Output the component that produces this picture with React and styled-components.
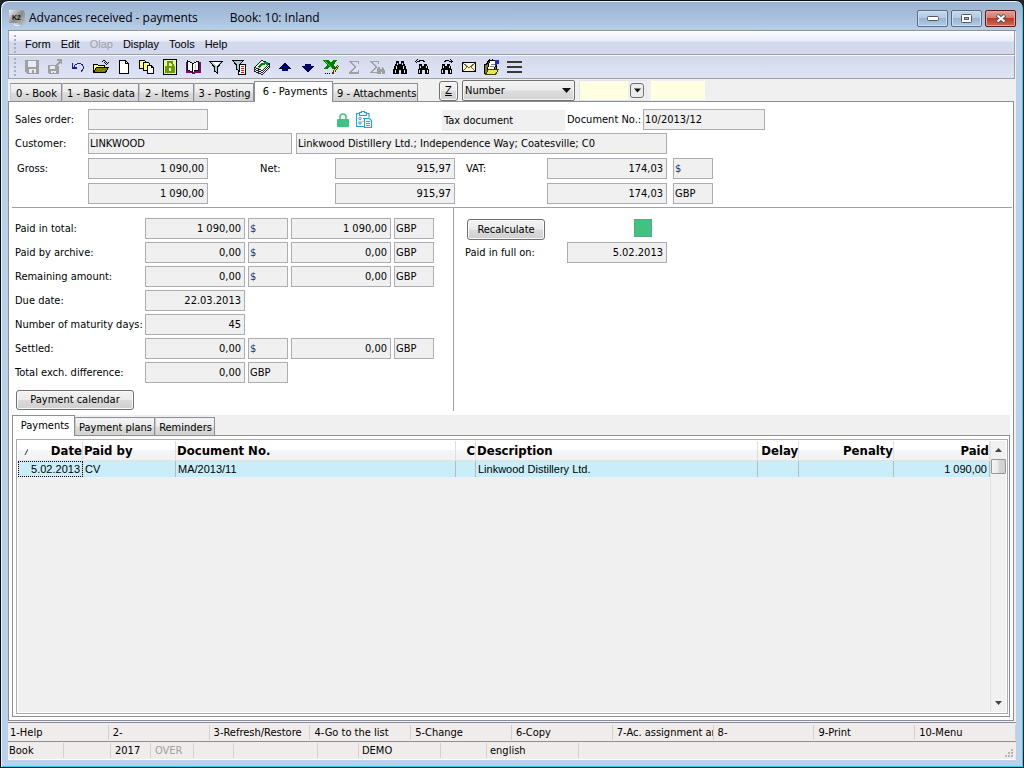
import React from "react";
import styled, { createGlobalStyle } from "styled-components";

const Global = createGlobalStyle`
  *, *::before, *::after { box-sizing: border-box; }
  body { margin: 0; background: #20242c; color: #000; }
  body, button, input, select {
    font-family: "DejaVu Sans Condensed", "Noto Sans", sans-serif;
    font-size: 11px;
    line-height: 14px;
  }
  button, input, select { color: #000; margin: 0; }
`;

/* ---------- window frame ---------- */

const Frame = styled.div`
  display: flex;
  flex-direction: column;
  min-height: 100vh;
  padding: 0 6px 7px 6px;
  border: 1px solid #0b0e12;
  border-radius: 8px 8px 0 0;
  background: linear-gradient(#99b3d1 0, #a6bedb 14px, #b9d1ea 32px, #b9d1ea 100%);
  box-shadow: inset 1px 1px 0 #e8f1fa, inset -1px -1px 0 #28d0ea;
`;

const TitleBar = styled.header`
  display: flex;
  align-items: center;
  height: 29px;
  padding: 5px 1px 0 2px;
  font-family: "Open Sans", "Noto Sans", sans-serif;
  font-size: 12px;
`;

const Title = styled.h1`
  margin: 0 0 0 4px;
  font-size: 12px;
  line-height: 16px;
  font-weight: 400;
`;

const BookName = styled.span`
  flex: 1;
  margin-left: 32px;
`;

const WindowButtons = styled.div`
  display: flex;
  gap: 3px;
`;

const WindowButton = styled.button`
  display: flex;
  align-items: center;
  justify-content: center;
  width: 31px;
  height: 17px;
  padding: 0;
  border: 1px solid ${(p) => (p.$close ? "#5a1a1c" : "#576b85")};
  border-radius: 2px;
  background: ${(p) =>
    p.$close
      ? "linear-gradient(#e0a195 0, #d3796a 48%, #bd3a22 50%, #cf6a50 100%)"
      : "linear-gradient(#c5d7ea 0, #b3c9e1 48%, #98b4d2 50%, #b4cbe4 100%)"};
  box-shadow: inset 0 0 0 1px ${(p) => (p.$close ? "#e5a79c" : "#d0dfef")};
`;

const Client = styled.main`
  display: flex;
  flex: 1;
  flex-direction: column;
  margin: 0 1px;
  border-top: 1px solid #8f9299;
  background: #f0f0f0;
`;

/* ---------- menu and tool bars ---------- */

const BarBase = styled.div`
  display: flex;
  align-items: center;
  margin-right: 1px;
  border: solid #a0a0a4;
  border-width: 0 1px 1px 1px;
`;

const MenuBar = styled(BarBase).attrs({ as: "nav" })`
  height: 24px;
  padding-top: 2px;
  background: linear-gradient(#fdfdfe 0, #e8ecf7 10px, #d3d9ec 11px, #d3d9ec 100%);
`;

const ToolBar = styled(BarBase)`
  height: 24px;
  border-top: 1px solid #f8f8fc;
  background: linear-gradient(#d3d9ec, #dfe4f5);
`;

const Grip = styled.span`
  width: 2px;
  height: 18px;
  margin: 0 4px 0 5px;
  background: repeating-linear-gradient(#a9afc2 0 2px, transparent 2px 4px);
`;

const MenuItem = styled.button`
  padding: 0 5px;
  border: 0;
  background: none;
  font-family: "Liberation Sans", sans-serif;
  font-size: 11px;
  &:disabled { color: #a0a0a8; }
`;

const ToolButton = styled.button`
  display: flex;
  align-items: center;
  justify-content: center;
  width: 23px;
  height: 20px;
  padding: 0;
  border: 0;
  background: none;
`;

/* ---------- tabs ---------- */

const TabStrip = styled.div`
  display: flex;
  align-items: flex-end;
  height: ${(p) => (p.$small ? "20px" : "22px")};
  padding-left: ${(p) => (p.$small ? "0" : "2px")};
`;

const Tab = styled.button`
  height: ${(p) => (p.$active ? "21px" : "18px")};
  padding: ${(p) => (p.$active ? "0 2px 0 5px" : "2px 2px 0 3px")};
  width: ${(p) => p.$width}px;
  margin-bottom: ${(p) => (p.$active ? "-1px" : "0")};
  border: 1px solid #8c8e96;
  border-bottom: 0;
  border-left-color: ${(p) => (p.$active ? "#8c8e96" : "#c8c8cc")};
  background: ${(p) => (p.$active ? "#fff" : "linear-gradient(#f4f4f4 0, #ebebeb 48%, #dcdcdc 52%, #d2d2d2 100%)")};
  white-space: nowrap;
  text-align: center;
  position: relative;
`;

const SearchTools = styled.div`
  display: flex;
  align-items: center;
  align-self: flex-start;
  margin: 1px 0 0 21px;
`;

const PushButton = styled.button`
  height: ${(p) => (p.$small ? "20px" : "21px")};
  width: ${(p) => p.$width}px;
  padding: 0;
  border: 1px solid #707070;
  border-radius: 3px;
  background: linear-gradient(#f3f3f3 0, #ebebeb 48%, #dadada 52%, #cfcfcf 100%);
  box-shadow: inset 0 0 0 1px #fafafa;
`;

const SortPicker = styled.div`
  position: relative;
  margin: 0 4px;
  svg {
    position: absolute;
    right: 4px;
    top: 8px;
    pointer-events: none;
  }
`;

const SortSelect = styled.select`
  display: block;
  width: 113px;
  height: 21px;
  padding: 0 2px;
  border: 1px solid #707070;
  border-radius: 2px;
  appearance: none;
  background: linear-gradient(#f3f3f3 0, #ebebeb 48%, #dddddd 52%, #d2d2d2 100%);
  box-shadow: inset 0 0 0 1px #f6f6f6;
`;

const FilterBox = styled.div`
  display: flex;
  align-items: center;
  height: 21px;
  margin-right: 4px;
  padding-right: 2px;
  border: 1px solid #e3e3ea;
`;

const FilterInput = styled.input`
  width: ${(p) => p.$width}px;
  height: 19px;
  margin-right: 2px;
  padding: 0 3px;
  border: 0;
  background: #ffffe1;
`;

const DropButton = styled.button`
  display: flex;
  align-items: center;
  justify-content: center;
  width: 14px;
  height: 15px;
  padding: 0;
  border: 1px solid #707070;
  border-radius: 3px;
  background: #ececec;
`;

/* ---------- page and form ---------- */

const Page = styled.section`
  display: flex;
  flex: 1;
  flex-direction: column;
  margin-right: 2px;
  border: 1px solid #8c8e96;
  background: #fff;
`;

const DocumentForm = styled.div`
  display: grid;
  row-gap: 4px;
  margin: 0 1px 0 3px;
  padding: 6px 0 3px 3px;
  border-bottom: 1px solid #a0a0a0;
`;

const FormRow = styled.div`
  display: grid;
  grid-template-columns: ${(p) => p.$columns};
  align-items: center;
  height: 21px;
`;

const FieldLabel = styled.label`
  padding-left: ${(p) => p.$inset || 0}px;
  white-space: nowrap;
`;

const Field = styled.input.attrs({ readOnly: true })`
  width: 100%;
  min-width: 0;
  height: 21px;
  padding: ${(p) => (p.$number ? "0 3px 1px" : "0 1px 1px")};
  border: 1px solid #abadb3;
  border-radius: 0;
  background: #f0f0f0;
  color: ${(p) => (p.$accent ? "#0b3c7c" : "#000")};
  text-align: ${(p) => (p.$number ? "right" : "left")};
  outline: none;
`;

const StateIcons = styled.div`
  display: flex;
  align-items: center;
  gap: 7px;
  padding-left: 129px;
`;

const DocumentKind = styled.div`
  height: 21px;
  margin: 2px 0 0;
  padding: 4px 2px;
  background: #f0f0f0;
`;

const Summary = styled.div`
  display: grid;
  grid-template-columns: 445px 1fr;
  margin-bottom: 4px;
`;

const Totals = styled.div`
  display: grid;
  row-gap: 3px;
  padding: 10px 0 1px 6px;
  border-right: 1px solid #a0a0a0;
`;

const TotalRow = styled(FormRow)`
  column-gap: 3px;
`;

const ButtonLine = styled.div`
  display: flex;
  margin: 4px 0 0 1px;
`;

const Settlement = styled.div`
  display: flex;
  flex-direction: column;
  gap: 2px;
  padding: 11px 0 0 11px;
`;

const SettlementHead = styled.div`
  display: flex;
  align-items: flex-start;
  gap: 89px;
  padding-left: 2px;
`;

const PaidMark = styled.span`
  width: 18px;
  height: 18px;
  border: 1px solid #5aa883;
  background: #3fc380;
`;

/* ---------- payments grid ---------- */

const Lists = styled.div`
  display: flex;
  flex: 1;
  flex-direction: column;
  margin: 0 3px 3px 3px;
  background: #f0f0f0;
`;

const ListPanel = styled.div`
  display: flex;
  flex: 1;
  padding: 3px 1px 2px 3px;
  border: 1px solid #8c8e96;
  background: #fff;
`;

const GridBox = styled.div`
  display: flex;
  flex: 1;
  min-width: 0;
  padding: 1px;
  border: 1px solid #abadb3;
  background: #fff;
`;

const GridBody = styled.div`
  flex: 1;
  min-width: 0;
  background: #f0f0f0;
`;

const Grid = styled.table`
  width: 100%;
  border-collapse: separate;
  border-spacing: 0;
  table-layout: fixed;
`;

const HeadCell = styled.th`
  height: 20px;
  padding: 1px 0 0 1px;
  border-right: 1px solid #dedfe1;
  border-bottom: 1px solid #e3e3e3;
  background: linear-gradient(#fff 0, #fff 45%, #f4f5f6 50%, #f1f2f4 100%);
  font-size: 13px;
  line-height: 16px;
  font-weight: 700;
  text-align: ${(p) => (p.$right ? "right" : "left")};
  white-space: nowrap;
  svg { float: left; margin: 5px 0 0 4px; }
`;

const Cell = styled.td`
  height: 16px;
  padding: 0 2px;
  border-right: 1px solid #b5bcbf;
  background: #c9eefa;
  font-family: "Liberation Sans", sans-serif;
  font-size: 11px;
  line-height: 14px;
  text-align: ${(p) => (p.$right ? "right" : "left")};
  white-space: nowrap;
  outline: ${(p) => (p.$focused ? "1px dotted #000" : "none")};
  outline-offset: -1px;
`;

const ScrollBar = styled.div`
  display: flex;
  flex-direction: column;
  align-items: center;
  width: 16px;
  padding: 0 1px;
  border-left: 1px solid #e3e3e3;
  background: #f1f1f1;
`;

const ScrollArrow = styled.button`
  display: flex;
  align-items: center;
  justify-content: center;
  width: 14px;
  height: 18px;
  padding: 0;
  border: 0;
  background: none;
`;

const ScrollThumb = styled.div`
  width: 15px;
  height: 15px;
  border: 1px solid #979797;
  border-radius: 1px;
  background: linear-gradient(90deg, #f5f5f5 0, #e9e9eb 48%, #d6d6d8 52%, #cfcfd1 100%);
`;

const ScrollTrack = styled.div`
  flex: 1;
`;

/* ---------- bottom bars ---------- */

const FunctionBar = styled.div`
  display: grid;
  grid-template-columns: repeat(10, minmax(0, 1fr));
  height: 20px;
  margin-top: 1px;
  padding: 2px 0 1px;
  border: solid #8c8e96;
  border-width: 1px 0;
  background: #f0eceb;
`;

const FunctionKey = styled.button`
  padding: 0 0 0 4px;
  border: 0;
  border-right: 1px solid #d4d2d1;
  background: none;
  text-align: left;
  white-space: nowrap;
  overflow: hidden;
  &:first-child { padding-left: 2px; }
`;

const StatusBar = styled.footer`
  display: flex;
  height: 18px;
  padding: 1px 0;
  border-bottom: 1px solid #fff;
  background: #f0eceb;
`;

const StatusCell = styled.span`
  width: ${(p) => p.$width}px;
  padding: 1px 1px 0 ${(p) => p.$inset || 1}px;
  border-right: 1px solid #d4d2d1;
  color: ${(p) => (p.$muted ? "#a0a0a0" : "#000")};
`;

const GripCorner = styled.svg`
  align-self: flex-end;
  margin: 0 2px 0 auto;
`;

/* ---------- drawings ---------- */

const px = (d, fill = "#000") => <path d={d} fill={fill} />;
const ln = (d, stroke = "#000", fill = "none", w = 1) => (
  <path d={d} stroke={stroke} fill={fill} strokeWidth={w} />
);

const Binoculars = (
  <>
    {px("M4 2h3v3h2V2h3v3h1v2h1v3h1v5h-5v-4H8v4H1v-5h1V7h1V5h1zM8 11h2v4H6v-4z")}
    {px("M5 4h1v2H5zM4 7h1v3H4zM3 11h1v3H3zM10 4h1v2h-1zM11 7h1v3h-1zM12 11h1v3h-1zM7 11h2v4H7z", "#dde2f3")}
  </>
);
const SmallBinoculars = (
  <>
    {px("M4 5h3v2h2V5h3v2h1v3h1v5h-4v-4H7v4H3v-5h1z")}
    {px("M5 7h1v2H5zM4 11h1v3H4zM11 7h1v2h-1zM12 11h1v3h-1z", "#dde2f3")}
  </>
);

const tools = [
  ["Save", <>
    {px("M1 1h14v14H3l-2-2z", "#a0a0a0")}
    {px("M4 2h8v6H4zM5 10h7v4h-2v-3H8v3H5z", "#e9ecf6")}
  </>],
  ["Save and close", <>
    {px("M1 6h8v1h3v8H2l-1-1z", "#a0a0a0")}
    {px("M3 7h5v3H3zM4 12h5v2H7v-1H6v1H4z", "#e9ecf6")}
    {px("M10 0h5v5h-1V3l-4 4-2-1 4-4h-2z", "#a0a0a0")}
  </>],
  ["Undo", <>
    {ln("M3.500 8.500C5 4.500 10 3 12.500 6C14 8.500 13 11 11 12.500", "#1c1ca0")}
    {px("M2 4h1v4h4v1l-1 1H2z", "#1c1ca0")}
  </>],
  ["Open", <>
    {ln("M8.500 3.500C10 1 13 1 13.500 4.500M11.500 3.500l2 2 2-2")}
    {ln("M.500 13V5.500h4l1 1h6V9", "#000", "#ffff80")}
    {ln("M.500 13.500l3-5h12l-3 5z", "#000", "#808000")}
  </>],
  ["New", <>{ln("M3.500 1.500h6l3 3v10h-9zM9.500 1.500v3h3", "#000", "#fff")}</>],
  ["Copy", <>
    {ln("M.500 1.500h5l1 1v7h-6z", "#000", "#ffff80")}
    {ln("M4.500 3.500h5l1 1v7h-6z", "#000", "#ffff80")}
    {ln("M8.500 6.500h4l2 2v6h-6zM12.500 6.500v2h2", "#000", "#fff")}
  </>],
  ["Lock", <>
    {ln("M1.500 .5h13v15h-13z", "#000", "#fff")}
    {px("M2 1h12v14H2z", "#e2f4a8")}
    {ln("M5.500 8V5c0-3 5-3 5 0v3", "#6b9a00", "none", 2)}
    {px("M3 7h10v7H3z", "#6b9a00")}
    {px("M7 9h2v3H7z", "#fff")}
  </>],
  ["Book", <>
    {px("M1 3h2v9h4l1 1 1-1h5V3h2v11h-5l-2 1H7l-1-1H1z", "#800080")}
    {px("M3 1l5 3 5-3v11H9l-1 1-1-1H3z", "#fff")}
    {ln("M2.500 1.500l5 3v9l-5-3zM8 4.500l4-2h1v9H9")}
    {ln("M10.500 5v5", "#c0c0c0")}
  </>],
  ["Filter", <>{ln("M1.500 2.500h13L9.500 8v6l-3-2V8z", "#000", "#9fd3d8")}{px("M4 3h8L8 7z", "#fff")}</>],
  ["Filter list", <>
    {ln("M7.500 5.500h7v10h-7z", "#000", "#fff")}
    {ln("M1.500 1.500h11L8.500 6v6l-3-2V6z", "#000", "#9fd3d8")}
    {ln("M10 7.500h3M10 9.500h3M10 11.500h3M10 13.500h3", "#e02020")}
  </>],
  ["Ledger", <>
    {ln("M.500 8.500l7-7 8 3-7 7zM.500 8.500v2l8 3 7-7v-2M.500 10.500v2l8 3 7-7v-2", "#222", "#f0f0f0")}
    {ln("M5 8.500c1-3 3-4 6-3", "#008000", "none", 2)}
    {px("M9 3h5v5z", "#009030")}
  </>],
  ["Previous", <>{px("M8 4l6 6h-3v2H5v-2H2z", "#000090")}{ln("M8 4.500l5.500 5H2.500z", "#000040")}</>],
  ["Next", <>{px("M8 13L2 7h3V5h6v2h3z", "#000090")}{ln("M8 12.500l5.500-5H2.500z", "#000040")}</>],
  ["Export to sheet", <>
    {px("M0 1h5l3 3 2-3h4l-3 5 2 4H9L7 7l-3 3H1l3-4z", "#008000")}
    {ln("M2 2l7 7", "#50c050")}
    {px("M2 14h1v1H2zM4 14h1v1H4zM6 14h1v1H6z")}
    {ln("M9.500 14.500l1-3 4-5 1 1-4 6z", "#404000", "#ffff40")}
  </>],
  ["Sum", <>{px("M3 2h10v3h-1V3H6l4 5-5 5h7v-2h1v4H3v-1l5-6-5-5z", "#a0a0a0")}</>],
  ["Sum selected", <>
    {px("M1 2h9v3H9V3H4l4 5-5 5h5v1H1v-1l5-5-5-5z", "#a0a0a0")}
    {px("M9 8h2v2h2V8h1l2 4v3h-3v-2h-1v2H8v-4z", "#a0a0a0")}
  </>],
  ["Find", Binoculars],
  ["Find previous", <>{SmallBinoculars}{ln("M1.500 2.500h3M2.500 4.500l-2-2 2-2M4 2.500C6 .5 8 1 9.500 3")}</>],
  ["Find next", <>{SmallBinoculars}{ln("M11 2.500h3M12.500 4.500l2-2-2-2M12 2.500C10 .5 8 1 6.500 3")}</>],
  ["Mail", <>
    {ln("M1.500 3.500h13v9h-13z", "#000", "#fff8c8")}
    {ln("M2 4l6 5 6-5M2 12l4-4M14 12l-4-4", "#606060")}
  </>],
  ["Notes", <>
    {ln("M.500 14.500v-9h2l2-4h8v9l-3 4z", "#000", "#808000")}
    {ln("M3.500 10.500l2-9h7l-2 9z", "#000", "#fff")}
    {ln("M6.500 5.500h4M6 7.500h4", "#808080")}
    {ln("M1.500 15.500l3-5h10l-3 5z", "#404000", "#e8e840")}
    {px("M11 1h4v4h-2l-2 2z", "#2030b0")}
    {px("M5 0h1v2H5zM8 0h1v2H8z")}
  </>],
  ["Menu", <>{px("M0 2h15v2H0zM0 7h15v2H0zM0 12h15v2H0z", "#383838")}</>],
];

const ToolIcon = ({ children }) => (
  <svg width="16" height="16" viewBox="0 0 16 16" shapeRendering="crispEdges" aria-hidden="true">
    {children}
  </svg>
);

const DownArrow = ({ w = 9 }) => (
  <svg width={w} height="5" viewBox="0 0 9 5" aria-hidden="true">
    <path d="M0 0h9L4.500 5z" fill="#111" />
  </svg>
);

const AppLogo = () => (
  <svg width="16" height="16" viewBox="0 0 16 16" role="img" aria-label="K2">
    <defs>
      <linearGradient id="logo" x1="0" y1="0" x2="1" y2="1">
        <stop offset="0" stopColor="#f2f2f2" />
        <stop offset="0.500" stopColor="#8a8a8a" />
        <stop offset="1" stopColor="#c8c8c8" />
      </linearGradient>
    </defs>
    <path d="M0 0h14l2 3v11l-3 2-4-3H0z" fill="url(#logo)" />
    <path d="M2 13l5 3h5z" fill="#e8e8e8" />
    <text x="3" y="10" fontFamily="Liberation Sans, sans-serif" fontSize="7" fontWeight="700" fill="#111">K2</text>
  </svg>
);

const GreenLock = () => (
  <svg width="12" height="14" viewBox="0 0 12 14" role="img" aria-label="Locked">
    <path d="M3 6V4a3 3 0 0 1 6 0v2" fill="none" stroke="#3fc380" strokeWidth="1.500" />
    <rect x="0" y="6" width="12" height="8" rx="1" fill="#3fc380" />
  </svg>
);

const Clipboard = () => (
  <svg width="17" height="17" viewBox="0 0 17 17" fill="none" stroke="#1fa4e0" role="img" aria-label="Document state">
    <path d="M8 15.500H.5v-13h3M10 2.500h3v4M3.500 1.500h2v-1h3v1h2v3h-7z" strokeWidth="1.200" />
    <circle cx="4" cy="7.500" r="1.200" />
    <circle cx="4" cy="12" r="1.200" />
    <path d="M7 7.500h4M6.500 10.500h1" />
    <path d="M8.500 7.500h5l2 2v7h-7z" fill="#fff" strokeWidth="1.200" />
    <path d="M10 10.500h4M10 12.500h4M10 14.500h4" />
  </svg>
);

/* ---------- data ---------- */

const menus = ["Form", "Edit", "Olap", "Display", "Tools", "Help"];

const mainTabs = [
  ["0 - Book", 52],
  ["1 - Basic data", 77],
  ["2 - Items", 55],
  ["3 - Posting", 60],
  ["6 - Payments", 79],
  ["9 - Attachments", 85],
];

const listTabs = [["Payments", 63], ["Payment plans", 80], ["Reminders", 60]];

const totals = [
  { id: "total", label: "Paid in total:", values: ["1 090,00", "$", "1 090,00", "GBP"] },
  { id: "archive", label: "Paid by archive:", values: ["0,00", "$", "0,00", "GBP"] },
  { id: "remaining", label: "Remaining amount:", values: ["0,00", "$", "0,00", "GBP"] },
  { id: "due", label: "Due date:", values: ["22.03.2013"] },
  { id: "maturity", label: "Number of maturity days:", values: ["45"] },
  { id: "settled", label: "Settled:", values: ["0,00", "$", "0,00", "GBP"] },
  { id: "exchange", label: "Total exch. difference:", values: ["0,00", "GBP"] },
];

const columns = [
  { title: "Date", width: 65, right: true, value: "5.02.2013" },
  { title: "Paid by", width: 93, value: "CV" },
  { title: "Document No.", width: 280, value: "MA/2013/11" },
  { title: "C", width: 20, right: true, value: "" },
  { title: "Description", value: "Linkwood Distillery Ltd." },
  { title: "Delay", width: 41, right: true, value: "" },
  { title: "Penalty", width: 95, right: true, value: "" },
  { title: "Paid", width: 96, right: true, value: "1 090,00" },
];

const functionKeys = [
  "1-Help", "2-", "3-Refresh/Restore", "4-Go to the list", "5-Change",
  "6-Copy", "7-Ac. assignment and", "8-", "9-Print", "10-Menu",
];

const statusCells = [
  { text: "Book", width: 56 },
  { width: 47 },
  { text: "2017", width: 40, inset: 4 },
  { text: "OVER", width: 43, inset: 4, muted: true },
  { width: 40 },
  { width: 84 },
  { width: 41 },
  { text: "DEMO", width: 82, inset: 3 },
  { width: 46 },
  { text: "english", width: 92, inset: 3 },
];

const valueNames = ["amount", "currency", "amount in home currency", "home currency"];

const totalColumns = "127px 100px 40px 100px 40px";
const amountColumns = "73px 120px 127px 120px 92px 120px 6px 40px";

/* ---------- screen ---------- */

export default function App() {
  return (
    <>
      <Global />
      <Frame>
        <TitleBar>
          <AppLogo />
          <Title>Advances received - payments</Title>
          <BookName>Book: 10: Inland</BookName>
          <WindowButtons>
            <WindowButton aria-label="Minimize">
              <svg width="12" height="5" aria-hidden="true"><rect x=".5" y=".5" width="11" height="4" rx="1" fill="#fff" stroke="#535666" /></svg>
            </WindowButton>
            <WindowButton aria-label="Maximize">
              <svg width="11" height="9" aria-hidden="true">
                <rect x=".5" y=".5" width="10" height="8" rx="1" fill="#fff" stroke="#535666" />
                <rect x="3.500" y="3.500" width="4" height="2" fill="#9fb8d5" stroke="#535666" />
              </svg>
            </WindowButton>
            <WindowButton $close aria-label="Close">
              <svg width="12" height="9" aria-hidden="true">
                <path d="M2 1l8 7M10 1L2 8" stroke="#535666" strokeWidth="4" />
                <path d="M2.500 1.500l7 6M9.500 1.500l-7 6" stroke="#fff" strokeWidth="2" />
              </svg>
            </WindowButton>
          </WindowButtons>
        </TitleBar>

        <Client>
          <MenuBar>
            <Grip />
            {menus.map((m) => (
              <MenuItem key={m} disabled={m === "Olap"}>{m}</MenuItem>
            ))}
          </MenuBar>
          <ToolBar role="toolbar">
            <Grip />
            {tools.map(([name, icon]) => (
              <ToolButton key={name} aria-label={name}><ToolIcon>{icon}</ToolIcon></ToolButton>
            ))}
          </ToolBar>

          <TabStrip>
            {mainTabs.map(([name, width]) => (
              <Tab key={name} $width={width} $active={name === "6 - Payments"}>{name}</Tab>
            ))}
            <SearchTools>
              <PushButton $small $width={19}><u>Z</u></PushButton>
              <SortPicker>
                <SortSelect aria-label="Sort by" defaultValue="Number"><option>Number</option></SortSelect>
                <DownArrow />
              </SortPicker>
              <FilterBox>
                <FilterInput $width={48} aria-label="Filter from" />
                <DropButton aria-label="Choose filter"><DownArrow w={7} /></DropButton>
              </FilterBox>
              <FilterInput $width={54} aria-label="Filter to" />
            </SearchTools>
          </TabStrip>

          <Page>
            <DocumentForm>
              <FormRow $columns="73px 120px 234px 123px 78px 122px">
                <FieldLabel htmlFor="order">Sales order:</FieldLabel>
                <Field id="order" />
                <StateIcons><GreenLock /><Clipboard /></StateIcons>
                <DocumentKind>Tax document</DocumentKind>
                <FieldLabel htmlFor="docno" $inset={2}>Document No.:</FieldLabel>
                <Field id="docno" defaultValue="10/2013/12" />
              </FormRow>
              <FormRow $columns="73px 204px 4px 371px">
                <FieldLabel htmlFor="customer">Customer:</FieldLabel>
                <Field id="customer" defaultValue="LINKWOOD" />
                <span />
                <Field aria-label="Customer address" defaultValue="Linkwood Distillery Ltd.; Independence Way; Coatesville; C0" />
              </FormRow>
              <FormRow $columns={amountColumns}>
                <FieldLabel htmlFor="gross" $inset={2}>Gross:</FieldLabel>
                <Field id="gross" $number defaultValue="1 090,00" />
                <FieldLabel htmlFor="net" $inset={52}>Net:</FieldLabel>
                <Field id="net" $number defaultValue="915,97" />
                <FieldLabel htmlFor="vat" $inset={11}>VAT:</FieldLabel>
                <Field id="vat" $number defaultValue="174,03" />
                <span />
                <Field aria-label="Currency" $accent defaultValue="$" />
              </FormRow>
              <FormRow $columns={amountColumns}>
                <span />
                <Field aria-label="Gross in home currency" $number defaultValue="1 090,00" />
                <span />
                <Field aria-label="Net in home currency" $number defaultValue="915,97" />
                <span />
                <Field aria-label="VAT in home currency" $number defaultValue="174,03" />
                <span />
                <Field aria-label="Home currency" defaultValue="GBP" />
              </FormRow>
            </DocumentForm>

            <Summary>
              <Totals>
                {totals.map((t) => (
                  <TotalRow key={t.id} $columns={totalColumns}>
                    <FieldLabel htmlFor={t.id}>{t.label}</FieldLabel>
                    {t.values.map((v, i) => (
                      <Field
                        key={i}
                        id={i === 0 ? t.id : undefined}
                        aria-label={i === 0 ? undefined : `${t.label} ${valueNames[i]}`}
                        $number={i % 2 === 0}
                        $accent={v === "$"}
                        defaultValue={v}
                      />
                    ))}
                  </TotalRow>
                ))}
                <ButtonLine><PushButton $small $width={118}>Payment calendar</PushButton></ButtonLine>
              </Totals>
              <Settlement>
                <SettlementHead>
                  <PushButton $width={78}>Recalculate</PushButton>
                  <PaidMark />
                </SettlementHead>
                <FormRow $columns="102px 100px">
                  <FieldLabel htmlFor="paidon">Paid in full on:</FieldLabel>
                  <Field id="paidon" $number defaultValue="5.02.2013" />
                </FormRow>
              </Settlement>
            </Summary>

            <Lists>
              <TabStrip $small>
                {listTabs.map(([name, width]) => (
                  <Tab key={name} $width={width} $active={name === "Payments"}>{name}</Tab>
                ))}
              </TabStrip>
              <ListPanel>
                <GridBox>
                  <GridBody>
                    <Grid>
                      <colgroup>
                        {columns.map((c) => <col key={c.title} width={c.width} />)}
                      </colgroup>
                      <thead>
                        <tr>
                          {columns.map((c, i) => (
                            <HeadCell key={c.title} $right={c.right}>
                              {i === 0 && (
                                <svg width="8" height="8" aria-hidden="true"><path d="M2 7l3-6" stroke="#333" /><path d="M2 7.500h6L5 1" fill="none" stroke="#fff" /></svg>
                              )}
                              {c.title}
                            </HeadCell>
                          ))}
                        </tr>
                      </thead>
                      <tbody>
                        <tr>
                          {columns.map((c, i) => (
                            <Cell key={c.title} $right={c.right} $focused={i === 0}>{c.value}</Cell>
                          ))}
                        </tr>
                      </tbody>
                    </Grid>
                  </GridBody>
                  <ScrollBar>
                    <ScrollArrow aria-label="Scroll up">
                      <svg width="7" height="4" aria-hidden="true"><path d="M0 4h7L3.500 0z" fill="#444" /></svg>
                    </ScrollArrow>
                    <ScrollThumb />
                    <ScrollTrack />
                    <ScrollArrow aria-label="Scroll down">
                      <svg width="7" height="4" aria-hidden="true"><path d="M0 0h7L3.500 4z" fill="#444" /></svg>
                    </ScrollArrow>
                  </ScrollBar>
                </GridBox>
              </ListPanel>
            </Lists>
          </Page>

          <FunctionBar>
            {functionKeys.map((k) => <FunctionKey key={k}>{k}</FunctionKey>)}
          </FunctionBar>
          <StatusBar>
            {statusCells.map((s, i) => (
              <StatusCell key={i} $width={s.width} $inset={s.inset} $muted={s.muted}>{s.text}</StatusCell>
            ))}
            <GripCorner width="9" height="9" aria-hidden="true">
              <path d="M6 0h2v2H6zM3 3h2v2H3zM6 3h2v2H6zM0 6h2v2H0zM3 6h2v2H3zM6 6h2v2H6z" fill="#b8b4b3" />
            </GripCorner>
          </StatusBar>
        </Client>
      </Frame>
    </>
  );
}
